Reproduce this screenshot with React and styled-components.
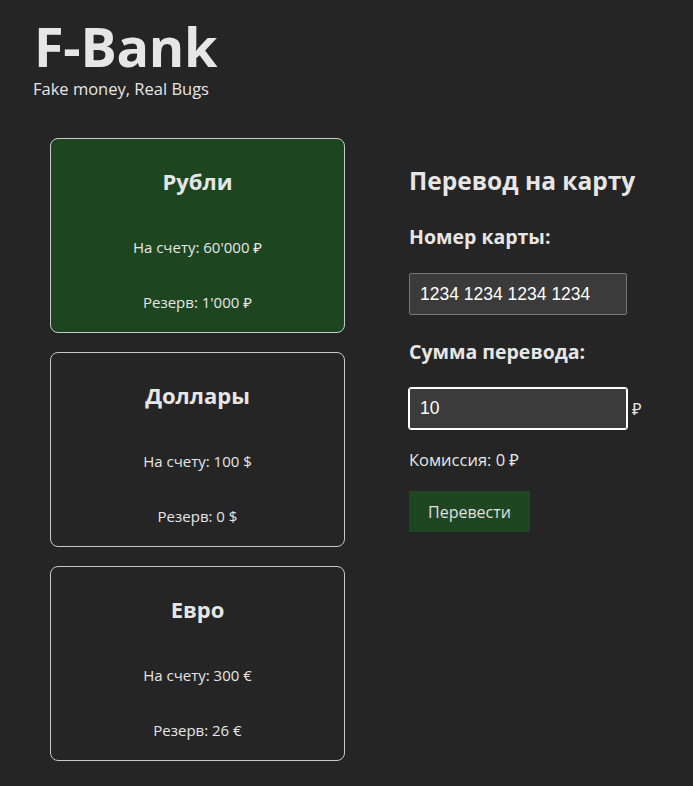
import React from "react";
import styled, { createGlobalStyle } from "styled-components";

const Global = createGlobalStyle`
  html, body { margin: 0; padding: 0; background: #252525; }
  body {
    font-family: "Open Sans", "Noto Sans", sans-serif;
    color: #e6e6e6;
  }
  * { box-sizing: border-box; }
`;

const Page = styled.div`
  min-height: 786px;
  background: #252525;
  padding: 16px 0 0 33px;
`;

const Header = styled.header`
  display: flex;
  flex-direction: column;
`;

const Logo = styled.h1`
  margin: 0 0 0 1px;
  font-size: 54px;
  line-height: 60px;
  font-weight: 700;
  letter-spacing: -0.3px;
  color: #e6e6e6;
`;

const Tagline = styled.div`
  font-size: 16.5px;
  line-height: 20px;
  margin-top: 3px;
  color: #e6e6e6;
`;

const Main = styled.main`
  display: flex;
  align-items: flex-start;
  gap: 64px;
  margin: 39px 0 0 17px;
`;

const Cards = styled.div`
  display: flex;
  flex-direction: column;
  gap: 19px;
  width: 295px;
`;

const Card = styled.section`
  height: 195px;
  border: 1px solid #c8c8c8;
  border-radius: 8px;
  background: ${(p) => (p.$active ? "#1d4620" : "transparent")};
  display: flex;
  flex-direction: column;
  align-items: center;
  padding-top: 26px;
  text-align: center;
`;

const CardTitle = styled.h2`
  margin: 0;
  font-size: 22px;
  line-height: 32px;
  font-weight: 700;
`;

const CardLine = styled.p`
  margin: ${(p) => (p.$first ? "40px" : "35px")} 0 0;
  font-size: 15px;
  line-height: 20px;
`;

const Transfer = styled.section`
  display: flex;
  flex-direction: column;
  align-items: flex-start;
  padding-top: 27px;
`;

const TransferTitle = styled.h2`
  margin: 0;
  font-size: 24.5px;
  line-height: 32px;
  font-weight: 700;
`;

const Label = styled.label`
  display: block;
  margin-top: ${(p) => p.$mt}px;
  font-size: 19.5px;
  line-height: 24px;
  font-weight: 700;
`;

const InputRow = styled.div`
  display: flex;
  align-items: center;
  gap: 5px;
  margin-top: ${(p) => p.$mt}px;
`;

const Input = styled.input`
  width: 218px;
  height: ${(p) => (p.$focused ? "41px" : "42px")};
  padding: 0 10px;
  font-family: "Liberation Sans", Arial, sans-serif;
  font-size: 17.5px;
  color: #ffffff;
  background: #3b3b3b;
  border: 1px solid ${(p) => (p.$focused ? "#ffffff" : "#767676")};
  border-radius: 2px;
  outline: ${(p) => (p.$focused ? "1px solid #ffffff" : "none")};
  caret-color: #ffffff;
`;

const Currency = styled.span`
  font-size: 16.5px;
  color: #e6e6e6;
`;

const Fee = styled.div`
  margin-top: 21px;
  font-size: 16.5px;
  line-height: 20px;
`;

const Button = styled.button`
  margin-top: 21px;
  width: 121px;
  height: 41px;
  border: none;
  background: #1e4620;
  color: #e0e0e0;
  font-family: "Open Sans", "Noto Sans", sans-serif;
  font-size: 16px;
  cursor: pointer;
`;

const accounts = [
  { title: "Рубли", balance: "60'000 ₽", reserve: "1'000 ₽", active: true },
  { title: "Доллары", balance: "100 $", reserve: "0 $" },
  { title: "Евро", balance: "300 €", reserve: "26 €" },
];

export default function App() {
  return (
    <Page>
      <Global />
      <Header>
        <Logo>F-Bank</Logo>
        <Tagline>Fake money, Real Bugs</Tagline>
      </Header>
      <Main>
        <Cards>
          {accounts.map((a) => (
            <Card key={a.title} $active={a.active}>
              <CardTitle>{a.title}</CardTitle>
              <CardLine $first>На счету: {a.balance}</CardLine>
              <CardLine>Резерв: {a.reserve}</CardLine>
            </Card>
          ))}
        </Cards>
        <Transfer>
          <TransferTitle>Перевод на карту</TransferTitle>
          <Label $mt={28}>Номер карты:</Label>
          <InputRow $mt={24}>
            <Input defaultValue="1234 1234 1234 1234" />
          </InputRow>
          <Label $mt={25}>Сумма перевода:</Label>
          <InputRow $mt={24}>
            <Input $focused defaultValue="10" />
            <Currency>₽</Currency>
          </InputRow>
          <Fee>Комиссия: 0 ₽</Fee>
          <Button>Перевести</Button>
        </Transfer>
      </Main>
    </Page>
  );
}
